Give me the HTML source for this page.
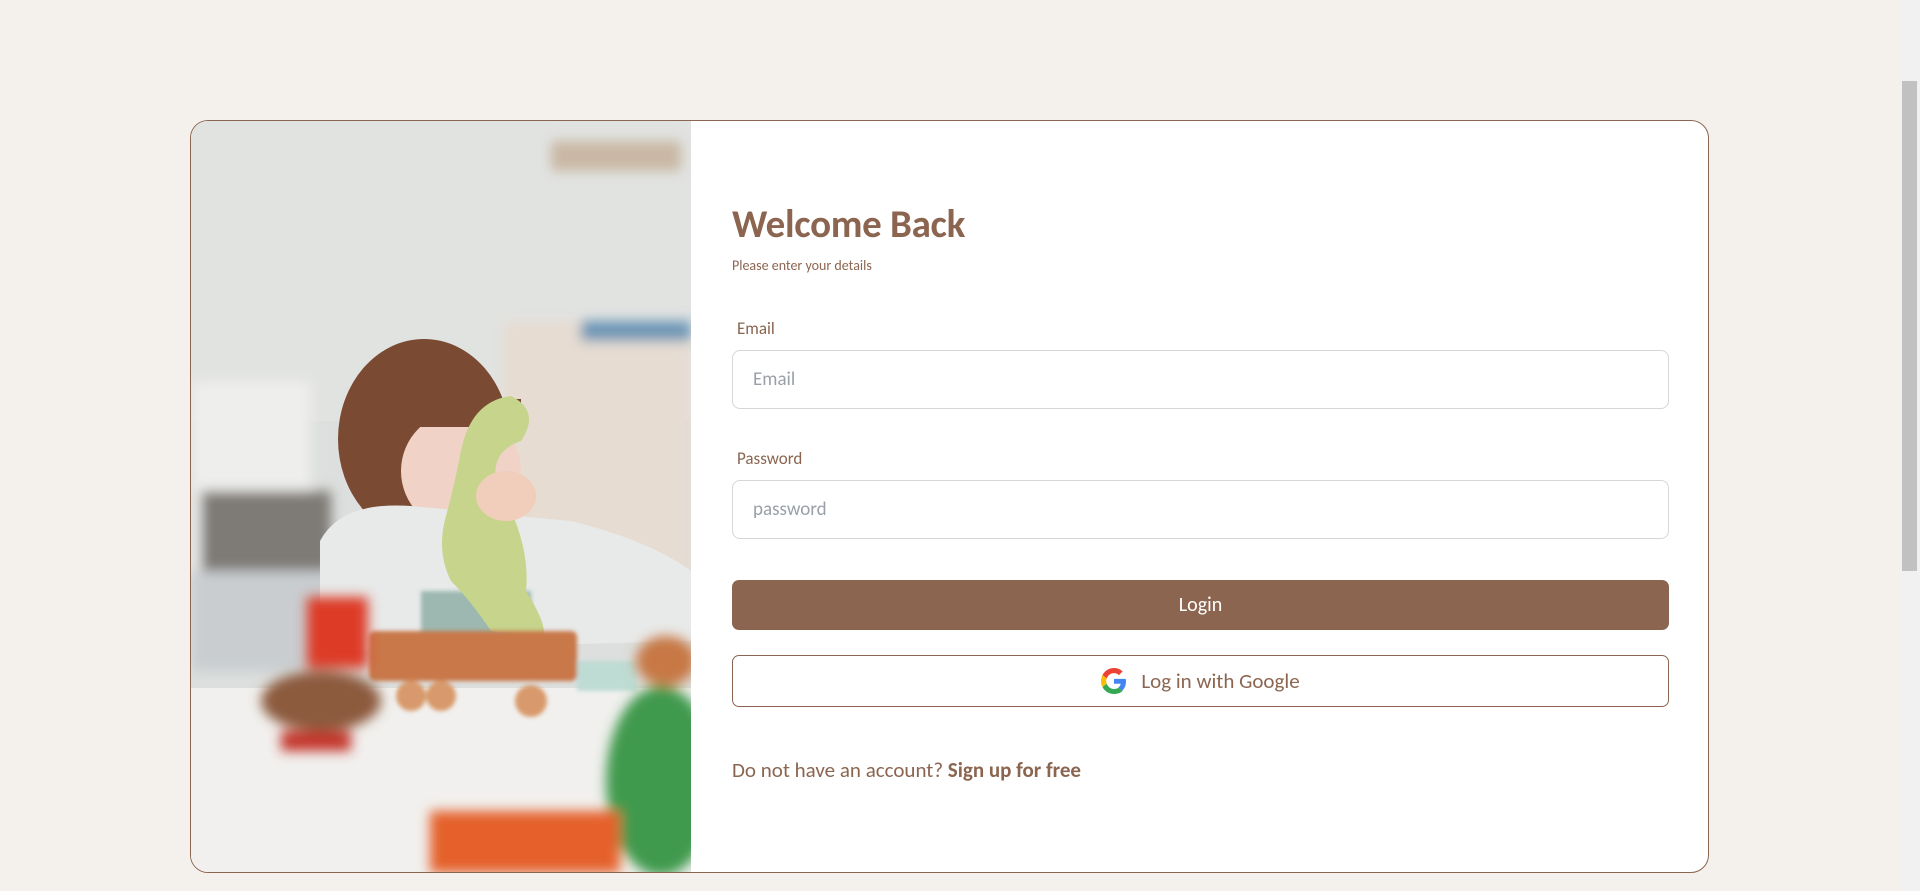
<!DOCTYPE html>
<html><head><meta charset="utf-8"><style>
*{box-sizing:border-box;margin:0;padding:0}
html,body{width:1920px;height:891px;overflow:hidden;background:#f4f1ed;font-family:Calibri,"Liberation Sans",sans-serif}
.card{position:absolute;left:190px;top:120px;width:1519px;height:753px;background:#fff;border:1px solid #8b6550;border-radius:18px;overflow:hidden}
.img{position:absolute;left:0;top:0;width:500px;height:752px}
.f{position:absolute;left:541px;width:937px;color:#8b6550}
h1{position:absolute;left:541px;top:80px;font-size:39px;font-weight:bold;color:#8b6550;letter-spacing:-0.3px;line-height:48px}
.sub{top:136px;font-size:14px}
.lbl{font-size:17px;left:546px}
.in{height:59px;border:1px solid #d6d6d6;border-radius:8px;font-size:19px;color:#9aa0a8;padding:0 20px;line-height:57px}
.btn{height:50px;background:#8b6550;border-radius:7px;color:#fff;font-size:20px;text-align:center;line-height:50px}
.g{height:52px;border:1px solid #8b6550;border-radius:7px;font-size:20px;text-align:center;line-height:50px;color:#8b6550;display:flex;justify-content:center;align-items:center;gap:14px}
.sb{position:absolute;right:0;top:0;width:20px;height:891px;background:#f1f1f1}
.th{position:absolute;right:3px;top:81px;width:15px;height:490px;background:#c1c1c1}
</style></head><body>
<div class="card">
<svg class="img" viewBox="0 0 500 752" preserveAspectRatio="none">
<defs><filter id="b"><feGaussianBlur stdDeviation="6"/></filter><filter id="b2"><feGaussianBlur stdDeviation="2"/></filter></defs>
<rect width="500" height="752" fill="#dcdfdd"/>
<rect x="0" y="0" width="500" height="300" fill="#e1e3e1"/>
<g filter="url(#b)">
<rect x="360" y="20" width="130" height="30" fill="#c9b8a4"/>
<rect x="0" y="260" width="120" height="200" fill="#eeeeec"/>
<rect x="10" y="370" width="130" height="80" fill="#7e7a76"/>
<rect x="312" y="200" width="188" height="300" fill="#e6dcd2"/>
<rect x="390" y="200" width="110" height="20" fill="#6b95b5"/>
<rect x="0" y="450" width="140" height="100" fill="#c9cdd0"/>
</g>
<ellipse cx="233" cy="318" rx="86" ry="100" fill="#7a4a33"/>
<ellipse cx="270" cy="350" rx="60" ry="60" fill="#f0d3c6"/>
<rect x="200" y="278" width="130" height="28" fill="#7a4a33"/>
<path d="M129 420 Q150 380 220 385 L380 400 Q460 420 500 450 L500 520 L129 530Z" fill="#e8eaea"/>
<path d="M230 470 L340 470 L340 520 L230 520Z" fill="#9cb8b0" filter="url(#b2)"/>
<rect x="0" y="567" width="500" height="185" fill="#f1f0ee"/>
<path d="M270 330 Q280 280 320 275 Q350 290 330 320 Q300 330 305 360 Q340 420 335 470 Q360 510 350 517 L300 510 Q280 480 260 460 Q245 430 255 395 Q262 370 270 330Z" fill="#c6d48c"/>
<ellipse cx="315" cy="375" rx="30" ry="25" fill="#f1cdbb"/>
<g filter="url(#b2)">
<rect x="178" y="510" width="208" height="50" rx="6" fill="#c9784a"/>
<circle cx="220" cy="575" r="15" fill="#d89a6c"/>
<circle cx="250" cy="575" r="15" fill="#d89a6c"/>
<circle cx="340" cy="580" r="16" fill="#d89a6c"/>
<rect x="386" y="540" width="60" height="30" fill="#bfdcd4"/>
</g>
<g filter="url(#b)">
<rect x="116" y="476" width="61" height="71" fill="#dd3b25"/>
<ellipse cx="130" cy="580" rx="60" ry="30" fill="#8c5a3e"/>
<rect x="90" y="610" width="70" height="20" fill="#c3352a"/>
<ellipse cx="470" cy="660" rx="55" ry="95" fill="#3f9a4e"/>
<rect x="239" y="690" width="190" height="62" fill="#e5602c"/>
<ellipse cx="475" cy="540" rx="30" ry="25" fill="#c77845"/>
</g>
</svg>
<h1>Welcome Back</h1>
<div class="f sub">Please enter your details</div>
<div class="f lbl" style="top:197px">Email</div>
<div class="f in" style="top:229px">Email</div>
<div class="f lbl" style="top:327px">Password</div>
<div class="f in" style="top:359px">password</div>
<div class="f btn" style="top:459px">Login</div>
<div class="f g" style="top:534px"><svg width="26" height="26" viewBox="0 0 48 48"><path fill="#EA4335" d="M24 9.5c3.5 0 6.6 1.2 9.1 3.6l6.8-6.8C35.8 2.4 30.3 0 24 0 14.6 0 6.6 5.4 2.7 13.2l7.9 6.2C12.5 13.6 17.8 9.5 24 9.5z"/><path fill="#4285F4" d="M46.1 24.5c0-1.6-.1-3.1-.4-4.5H24v9h12.4c-.5 2.9-2.2 5.3-4.6 7l7.5 5.8c4.4-4 6.8-10 6.8-17.3z"/><path fill="#FBBC05" d="M10.5 28.6c-.5-1.4-.8-3-.8-4.6s.3-3.2.8-4.6l-7.9-6.2C1 16.5 0 20.1 0 24s.9 7.5 2.7 10.8l7.8-6.2z"/><path fill="#34A853" d="M24 48c6.5 0 11.9-2.1 15.9-5.8l-7.5-5.8c-2.1 1.4-4.8 2.3-8.4 2.3-6.2 0-11.5-4.2-13.4-9.9l-7.9 6.2C6.6 42.6 14.6 48 24 48z"/></svg><span style="font-size:21px">Log in with Google</span></div>
<div class="f" style="top:636px;font-size:21px">Do not have an account? <b>Sign up for free</b></div>
</div>
<div class="sb"><div class="th"></div></div>
</body></html>
